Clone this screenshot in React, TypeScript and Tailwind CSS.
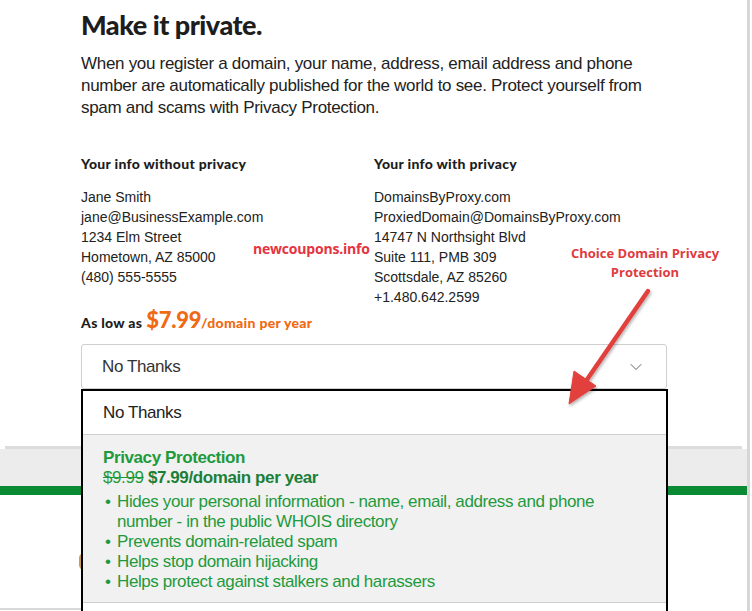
import { ChevronDown } from 'lucide-react'

const withoutPrivacy = [
  'Jane Smith',
  'jane@BusinessExample.com',
  '1234 Elm Street',
  'Hometown, AZ 85000',
  '(480) 555-5555',
]

const withPrivacy = [
  'DomainsByProxy.com',
  'ProxiedDomain@DomainsByProxy.com',
  '14747 N Northsight Blvd',
  'Suite 111, PMB 309',
  'Scottsdale, AZ 85260',
  '+1.480.642.2599',
]

const benefits = [
  'Hides your personal information - name, email, address and phone number - in the public WHOIS directory',
  'Prevents domain-related spam',
  'Helps stop domain hijacking',
  'Helps protect against stalkers and harassers',
]

const heading = "font-['Lato',sans-serif]"
const body = "font-['Liberation_Sans',Arial,sans-serif]"

const InfoColumn = ({ title, lines }: { title: string; lines: string[] }) => (
  <div>
    <h3 className={`${heading} text-[14px] font-black leading-4 tracking-[0.3px] text-[#1d1d1d]`}>
      {title}
    </h3>
    <div className={`${body} mt-[15px] text-[14px] leading-5 text-[#222]`}>
      {lines.map((line) => (
        <p key={line}>{line}</p>
      ))}
    </div>
  </div>
)

const App = () => {
  return (
    <div className="relative h-[611px] w-[752px] overflow-hidden bg-white">
      <div className="flex h-full w-[750px] flex-col border-r-[3px] border-[#d6d6d6]">
        <div className="h-[446px] bg-white px-[81px] pt-[9px]">
          <h1 className={`${heading} text-[27px] font-black leading-8 tracking-[-0.5px] text-[#1d1d1d]`}>
            Make it private.
          </h1>
          <p className={`${body} mt-3 w-[575px] text-[17px] leading-[22px] tracking-[-0.3px] text-[#222]`}>
            When you register a domain, your name, address, email address and phone number are
            automatically published for the world to see. Protect yourself from spam and scams with
            Privacy Protection.
          </p>

          <div className="mt-[37px] grid grid-cols-[293px_1fr]">
            <InfoColumn title="Your info without privacy" lines={withoutPrivacy} />
            <InfoColumn title="Your info with privacy" lines={withPrivacy} />
          </div>

          <p className={`${heading} mt-[1px] flex items-baseline text-[14px] font-black leading-6 tracking-[0.3px] text-[#1d1d1d]`}>
            As low as
            <span className="ml-1 text-[22px] leading-6 tracking-[-0.3px] text-[#ef6a12]">$7.99</span>
            <span className="text-[#ef6a12]">/domain per year</span>
          </p>

          <div className="mt-[9px] flex h-[45px] w-[586px] items-center justify-between rounded-[3px] border border-[#cfcfcf] pl-5 pr-5">
            <span className={`${body} text-[17px] tracking-[-0.4px] text-[#333]`}>No Thanks</span>
            <ChevronDown className="h-5 w-5 text-[#666]" strokeWidth={1.2} />
          </div>
        </div>
        <div className="mx-[5px] h-[3px] bg-[#dcdcdc]" />
        <div className="h-[37px] bg-[#ececec]" />
        <div className="h-[9px] bg-[#0a8a32]" />
        <div className="flex-1 bg-white" />
      </div>
      <div className="absolute bottom-[1px] left-0 h-[2px] w-[272px] bg-[#d9d9d9]" />
      <div className="absolute left-[79px] top-[553px] h-[17px] w-[5px] rounded-l-full border-l-2 border-[#c99a55]" />

      <span className="absolute left-[253px] top-[238px] font-['Open_Sans',sans-serif] text-[14px] font-bold tracking-[-0.2px] text-[#e5333f]">
        newcoupons.info
      </span>
      <div className="absolute left-[555px] top-[244px] w-[180px] text-center font-['Open_Sans',sans-serif] text-[13px] font-bold leading-[19px] text-[#de3b3f]">
        Choice Domain Privacy
        <br />
        Protection
      </div>

      <div className="absolute left-[81px] top-[389px] w-[587px] border-2 border-black bg-white">
        <div className="flex h-[44px] items-center border-b border-[#cfcfcf] pl-5">
          <span className={`${body} text-[17px] tracking-[-0.4px] text-[#222]`}>No Thanks</span>
        </div>
        <div className={`${body} border-b border-[#cfcfcf] bg-[#f1f1f1] pb-[10px] pl-5 pt-[13px] text-[17px] leading-5 tracking-[-0.4px] text-[#1e9a3c]`}>
          <p className="font-bold">Privacy Protection</p>
          <p>
            <span className="line-through">$9.99</span>{' '}
            <span className="font-bold text-[#1b7f37]">$7.99/domain per year</span>
          </p>
          <ul className="mt-[4px] w-[500px]">
            {benefits.map((b) => (
              <li key={b} className="flex">
                <span className="w-[14px] shrink-0 pl-[2px]">•</span>
                <span>{b}</span>
              </li>
            ))}
          </ul>
        </div>
        <div className="h-[20px] bg-white" />
      </div>

      <svg className="pointer-events-none absolute left-0 top-0" width="752" height="611">
        <defs>
          <filter id="sh" x="-20%" y="-20%" width="140%" height="140%">
            <feDropShadow dx="1" dy="2" stdDeviation="1.5" floodColor="#000" floodOpacity="0.3" />
          </filter>
        </defs>
        <g filter="url(#sh)" fill="#e2403d" stroke="#e2403d">
          <line x1="648" y1="291" x2="586" y2="381" strokeWidth="4.5" strokeLinecap="round" />
          <polygon points="569,404 574,371 596,386" strokeWidth="1" strokeLinejoin="round" />
        </g>
      </svg>
    </div>
  )
}

export default App
